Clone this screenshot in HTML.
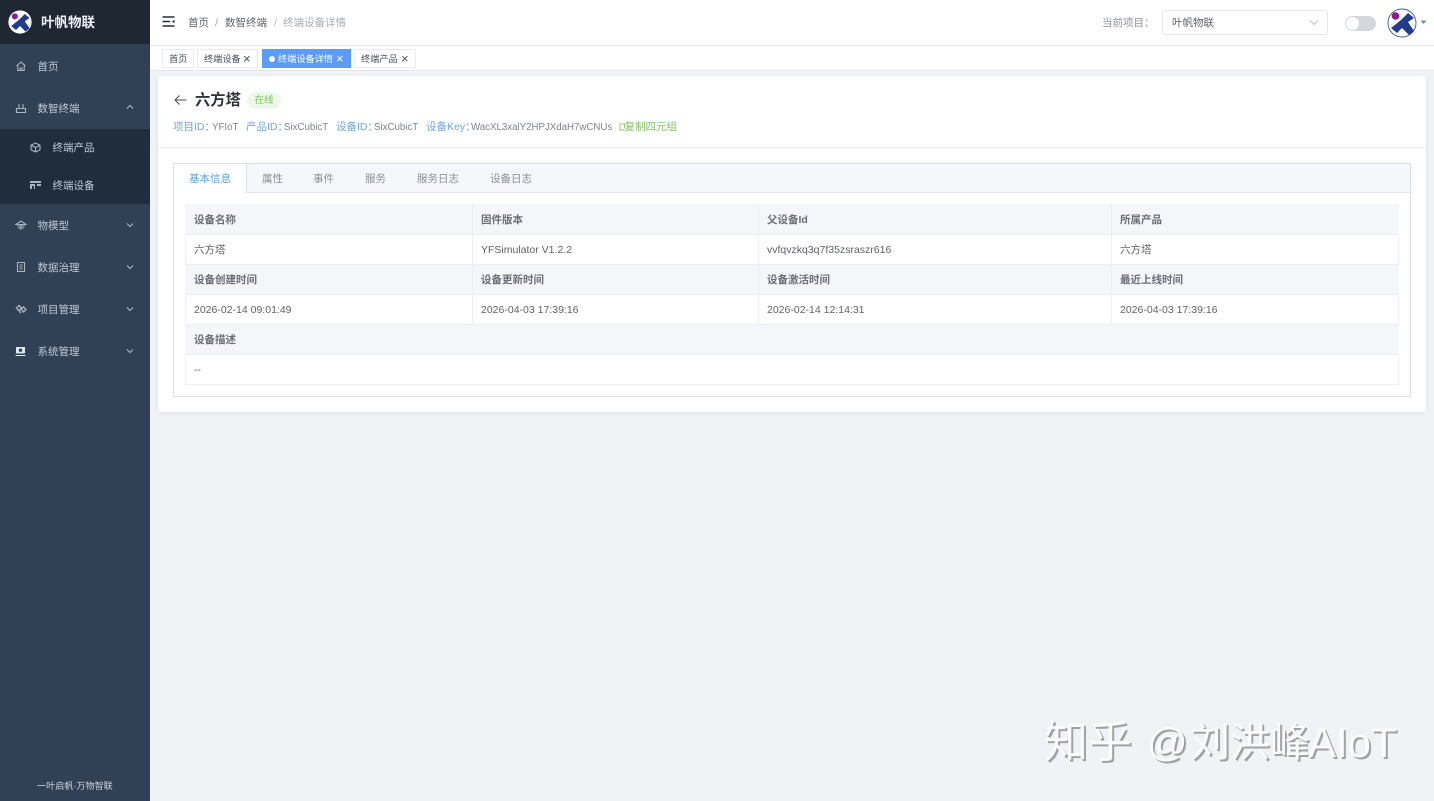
<!DOCTYPE html>
<html lang="zh">
<head>
<meta charset="utf-8">
<title>终端设备详情</title>
<style>
*{box-sizing:border-box}
html{background:#f1f2f5}
html,body{margin:0;padding:0;width:1434px;height:801px;overflow:hidden}
body{position:relative;background:#f1f2f5;font-family:"Liberation Sans","Noto Sans CJK SC",sans-serif;font-size:10.5px;color:#606266;filter:blur(.35px)}
.a{position:absolute;white-space:nowrap;line-height:14px;margin-top:1px}
.box{position:absolute}
.m{color:#bfcbd9;font-size:10.5px}
.ic{position:absolute;fill:none;stroke:#a9b5c3;stroke-width:1.1}
.tag{position:absolute;top:49px;height:19px;background:#fff;border:1px solid #e9ebf0;color:#495060;font-size:9.2px;line-height:18px;padding-left:6px;white-space:nowrap}
.tag i{position:absolute;top:0;font-style:normal;font-size:13px;line-height:18px}
.th{color:#6a6e76;font-weight:700;font-size:10.5px}
.td{color:#606266;font-size:10.5px}
.lb{color:#6ea6e0;font-size:10.5px}
.vl{color:#80848c;font-size:9.7px;margin-top:2px}
.tb{color:#8b8f96;font-size:10.5px}
.w{position:absolute;white-space:nowrap;line-height:48px;color:#fbfbfb;text-shadow:2px 2px 0 #a0a2a5}
</style>
</head>
<body>
<!-- sidebar -->
<div class="box" style="left:0;top:0;width:150px;height:801px;background:#304156"></div>
<div class="box" style="left:0;top:0;width:150px;height:44px;background:#1f2733"></div>
<div class="box" style="left:0;top:129px;width:150px;height:75px;background:#1f2d3d"></div>

<svg class="box" style="left:8px;top:10px" width="24" height="24" viewBox="0 0 30 30"><circle cx="15" cy="15" r="14.500" fill="#fff"/><path d="M4 20 L14 12 L21 5 L27 10 L21 14 L27 23 L22 27 L15 20 L10 25 Z" fill="#233b8c"/><circle cx="8.500" cy="8" r="3.800" fill="#8e1c8e"/></svg>
<div class="a" style="left:41px;top:15px;color:#eef1f5;font-size:13.5px;font-weight:700">叶帆物联</div>

<svg class="ic" style="left:15px;top:60px" width="12" height="12" viewBox="0 0 12 12"><path d="M1.500 6 L6 2 L10.500 6 M2.800 5.500 V10.500 H9.200 V5.500 M5 10.500 V8 H7 V10.500"/></svg>
<div class="a m" style="left:37.500px;top:59px">首页</div>
<svg class="ic" style="left:15px;top:102px" width="12" height="12" viewBox="0 0 12 12"><path d="M1.500 6.500 H10.500 V10.500 H1.500 Z M4 6.500 V2 M8 6.500 V2"/></svg>
<div class="a m" style="left:37.500px;top:101px">数智终端</div>
<svg class="ic" style="left:126px;top:104px" width="8" height="6" viewBox="0 0 8 6"><path d="M1 4.500 L4 1.500 L7 4.500"/></svg>

<svg class="ic" style="left:30px;top:142px" width="11" height="11" viewBox="0 0 11 11"><path d="M5.500 1 L10 3.200 V7.800 L5.500 10 L1 7.800 V3.200 Z M1 3.200 L5.500 5.500 L10 3.200 M5.500 5.500 V10"/></svg>
<div class="a m" style="left:52.500px;top:140.300px">终端产品</div>
<svg class="box" style="left:30px;top:181px" width="11" height="8" viewBox="0 0 11 8"><path d="M0 0 H11 V2 H0 Z M0 3 H5 V8 H4 V5 H2 V8 H0 Z M7 3 H11 V5 H7 Z" fill="#a9b5c3"/></svg>
<div class="a m" style="left:52.500px;top:178.300px">终端设备</div>

<svg class="ic" style="left:15px;top:219px" width="12" height="12" viewBox="0 0 12 12"><path d="M1 5.500 L6 2 L11 5.500 Z M2 7 H10 M6 5.500 V11 M3 9 H9"/></svg>
<div class="a m" style="left:37.500px;top:218px">物模型</div>
<svg class="ic" style="left:126px;top:222px" width="8" height="6" viewBox="0 0 8 6"><path d="M1 1.500 L4 4.500 L7 1.500"/></svg>

<svg class="ic" style="left:15px;top:261px" width="12" height="12" viewBox="0 0 12 12"><path d="M2.500 1.500 H9.500 V10.500 H2.500 Z M4.500 4 H7.500 M4.500 6 H7.500 M4.500 8 H7.500"/></svg>
<div class="a m" style="left:37.500px;top:260px">数据治理</div>
<svg class="ic" style="left:126px;top:264px" width="8" height="6" viewBox="0 0 8 6"><path d="M1 1.500 L4 4.500 L7 1.500"/></svg>

<svg class="ic" style="left:15px;top:303px;stroke-width:1.4" width="12" height="12" viewBox="0 0 12 12"><path d="M1.500 5 L4 2.500 L6.500 5 L4 7.500 Z M6 6 L8.500 4 L11 6.500 L8.500 9 Z M4 8 L6 10"/></svg>
<div class="a m" style="left:37.500px;top:302px">项目管理</div>
<svg class="ic" style="left:126px;top:306px" width="8" height="6" viewBox="0 0 8 6"><path d="M1 1.500 L4 4.500 L7 1.500"/></svg>

<svg class="box" style="left:15px;top:346px" width="11" height="11" viewBox="0 0 11 11"><path d="M1 1 H10 V7.500 H1 Z" fill="#dfe5ec"/><circle cx="5.500" cy="4.200" r="1.700" fill="#304156"/><path d="M0.500 9 H10.500 V10 H0.500 Z" fill="#dfe5ec"/></svg>
<div class="a m" style="left:37.500px;top:344px">系统管理</div>
<svg class="ic" style="left:126px;top:348px" width="8" height="6" viewBox="0 0 8 6"><path d="M1 1.500 L4 4.500 L7 1.500"/></svg>

<div class="a" style="left:37px;top:778px;color:#cfd6df;font-size:9.100px">一叶启帆·万物智联</div>

<!-- top bar -->
<div class="box" style="left:150px;top:0;width:1284px;height:46px;background:#fff;border-bottom:1px solid #e6e8ec"></div>
<svg class="box" style="left:162px;top:16px" width="13" height="12" viewBox="0 0 13 12"><path d="M0.500 1 H12.500 M0.500 5.500 H8 M0.500 10 H12.500" stroke="#2b2f36" stroke-width="1.400" fill="none"/><path d="M12.500 3.800 L10 5.500 L12.500 7.200 Z" fill="#2b2f36"/></svg>
<div class="a" style="left:188px;top:15px;color:#5f6368">首页</div>
<div class="a" style="left:215px;top:15px;color:#9ea3aa">/</div>
<div class="a" style="left:225px;top:15px;color:#5f6368">数智终端</div>
<div class="a" style="left:274px;top:15px;color:#b4b8be">/</div>
<div class="a" style="left:283px;top:15px;color:#a9adb3">终端设备详情</div>

<div class="a" style="left:1102px;top:15px;color:#8f939a">当前项目：</div>
<div class="box" style="left:1162px;top:10px;width:166px;height:25px;background:#fff;border:1px solid #e4e7ed;border-radius:3px"></div>
<div class="a" style="left:1172px;top:15px;color:#606266">叶帆物联</div>
<svg class="box" style="left:1309px;top:19px" width="10" height="7" viewBox="0 0 10 7"><path d="M1 1.500 L5 5.500 L9 1.500" stroke="#c0c4cc" fill="none"/></svg>
<div class="box" style="left:1345px;top:16px;width:31px;height:15px;background:#d4d7de;border-radius:8px"></div>
<div class="box" style="left:1346px;top:17px;width:13px;height:13px;background:#fff;border-radius:50%"></div>
<svg class="box" style="left:1387px;top:8px" width="30" height="30" viewBox="0 0 30 30"><circle cx="15" cy="15" r="14" fill="#fff" stroke="#4a5680" stroke-width=".9"/><path d="M4 20 L14 12 L21 5 L27 10 L21 14 L27 23 L22 27 L15 20 L10 25 Z" fill="#233b8c"/><circle cx="8.500" cy="8" r="3.800" fill="#8e1c8e"/></svg>
<svg class="box" style="left:1420px;top:20px" width="7" height="5" viewBox="0 0 7 5"><path d="M0.500 0.500 H6.500 L3.500 4 Z" fill="#5a8fd0"/></svg>

<!-- tag bar -->
<div class="box" style="left:150px;top:46px;width:1284px;height:25px;background:#fff;border-bottom:1px solid #e4e6ea"></div>
<div class="tag" style="left:162px;width:32px">首页</div>
<div class="tag" style="left:197px;width:61px">终端设备<i style="left:45px">×</i></div>
<div class="tag" style="left:262px;width:89px;background:#5a9cf8;border-color:#5a9cf8;color:#fff"><span style="display:inline-block;width:6px;height:6px;border-radius:50%;background:#fff;margin-right:3px;vertical-align:0"></span>终端设备详情<i style="left:73px">×</i></div>
<div class="tag" style="left:354px;width:62px">终端产品<i style="left:46px">×</i></div>

<!-- main card -->
<div class="box" style="left:158px;top:76px;width:1268px;height:336px;background:#fff;border-radius:3px;box-shadow:0 1px 4px rgba(0,0,0,.08)"></div>
<svg class="box" style="left:174px;top:94px" width="13" height="12" viewBox="0 0 13 12"><path d="M12.500 6 H1 M5.500 1.500 L1 6 L5.500 10.500" stroke="#44484e" stroke-width="1" fill="none"/></svg>
<div class="a" style="left:195px;top:91px;font-size:15.300px;line-height:18px;font-weight:700;color:#2f3237">六方塔</div>
<div class="box" style="left:247px;top:92px;width:34px;height:17px;background:#eef8e8;border-radius:9px;color:#7cc35a;font-size:9.500px;line-height:17px;text-align:center">在线</div>

<div class="a lb" style="left:173px;top:119px">项目ID：</div><div class="a vl" style="left:212px;top:119px">YFIoT</div>
<div class="a lb" style="left:246px;top:119px">产品ID：</div><div class="a vl" style="left:284px;top:119px">SixCubicT</div>
<div class="a lb" style="left:336px;top:119px">设备ID：</div><div class="a vl" style="left:374px;top:119px">SixCubicT</div>
<div class="a lb" style="left:426px;top:119px">设备Key：</div><div class="a vl" style="left:471px;top:119px">WacXL3xalY2HPJXdaH7wCNUs</div>
<svg class="box" style="left:619px;top:122px" width="6" height="9" viewBox="0 0 6 9"><path d="M1 0.500 V8 H5.500 M2.500 2 H5.500 V6.500" stroke="#85c468" stroke-width=".9" fill="none"/></svg>
<div class="a" style="left:624.500px;top:119px;color:#85c468">复制四元组</div>

<div class="box" style="left:158px;top:147px;width:1268px;height:1px;background:#e9ebef"></div>

<!-- tabs -->
<div class="box" style="left:173px;top:163px;width:1238px;height:234px;border:1px solid #dcdfe6;background:#fff"></div>
<div class="box" style="left:174px;top:164px;width:1236px;height:29px;background:#f5f7fa;border-bottom:1px solid #e4e7ed"></div>
<div class="box" style="left:174px;top:164px;width:73px;height:29px;background:#fff;border-right:1px solid #dcdfe6"></div>
<div class="a" style="left:189px;top:171px;color:#5a9fe0">基本信息</div>
<div class="a tb" style="left:262px;top:171px">属性</div>
<div class="a tb" style="left:313px;top:171px">事件</div>
<div class="a tb" style="left:365px;top:171px">服务</div>
<div class="a tb" style="left:417px;top:171px">服务日志</div>
<div class="a tb" style="left:490px;top:171px">设备日志</div>

<!-- table -->
<div class="box" style="left:185px;top:204px;width:1214px;height:181px;background:#fff;border:1px solid #ebeef5;border-top:0"></div>
<div class="box" style="left:185px;top:204px;width:1214px;height:30px;background:#f5f6fa"></div>
<div class="box" style="left:185px;top:264px;width:1214px;height:30px;background:#f5f6fa"></div>
<div class="box" style="left:185px;top:324px;width:1214px;height:30px;background:#f5f6fa"></div>
<div class="box" style="left:185px;top:234px;width:1214px;height:1px;background:#ebeef5"></div>
<div class="box" style="left:185px;top:264px;width:1214px;height:1px;background:#ebeef5"></div>
<div class="box" style="left:185px;top:294px;width:1214px;height:1px;background:#ebeef5"></div>
<div class="box" style="left:185px;top:324px;width:1214px;height:1px;background:#ebeef5"></div>
<div class="box" style="left:185px;top:354px;width:1214px;height:1px;background:#ebeef5"></div>
<div class="box" style="left:472px;top:204px;width:1px;height:120px;background:#ebeef5"></div>
<div class="box" style="left:758px;top:204px;width:1px;height:120px;background:#ebeef5"></div>
<div class="box" style="left:1111px;top:204px;width:1px;height:120px;background:#ebeef5"></div>

<div class="a th" style="left:194px;top:212px">设备名称</div>
<div class="a th" style="left:481px;top:212px">固件版本</div>
<div class="a th" style="left:767px;top:212px">父设备Id</div>
<div class="a th" style="left:1120px;top:212px">所属产品</div>
<div class="a td" style="left:194px;top:242px">六方塔</div>
<div class="a td" style="left:481px;top:242px">YFSimulator V1.2.2</div>
<div class="a td" style="left:767px;top:242px">vvfqvzkq3q7f35zsraszr616</div>
<div class="a td" style="left:1120px;top:242px">六方塔</div>
<div class="a th" style="left:194px;top:272px">设备创建时间</div>
<div class="a th" style="left:481px;top:272px">设备更新时间</div>
<div class="a th" style="left:767px;top:272px">设备激活时间</div>
<div class="a th" style="left:1120px;top:272px">最近上线时间</div>
<div class="a td" style="left:194px;top:302px">2026-02-14 09:01:49</div>
<div class="a td" style="left:481px;top:302px">2026-04-03 17:39:16</div>
<div class="a td" style="left:767px;top:302px">2026-02-14 12:14:31</div>
<div class="a td" style="left:1120px;top:302px">2026-04-03 17:39:16</div>
<div class="a th" style="left:194px;top:332px">设备描述</div>
<div class="a td" style="left:194px;top:362px">--</div>

<!-- watermark -->
<div class="w" style="left:1044px;top:719px;font-size:44px">知乎</div>
<div class="w" style="left:1147px;top:719px;font-size:40px">@</div>
<div class="w" style="left:1190px;top:719px;font-size:40px">刘洪峰</div>
<div class="w" style="left:1308px;top:719px;font-size:42px">AIoT</div>
</body>
</html>
